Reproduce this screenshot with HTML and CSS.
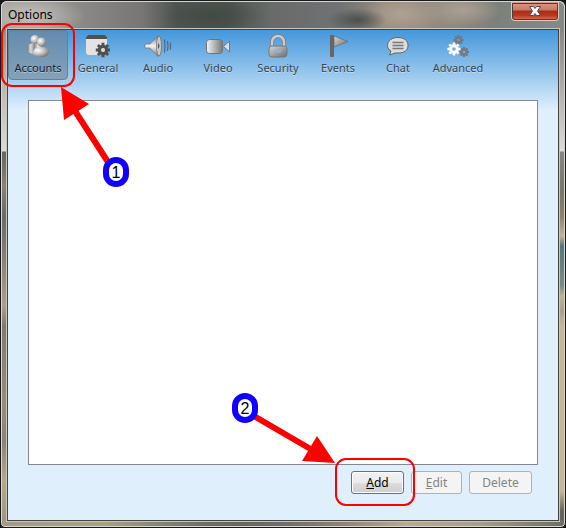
FILE: index.html
```html
<!DOCTYPE html>
<html lang="en">
<head>
<meta charset="utf-8">
<title>Options</title>
<link rel="stylesheet" href="styles.css">
</head>
<body>
<svg class="defs" aria-hidden="true">
  <defs>
    <linearGradient id="metal" x1="0" x2="1" y1="0" y2="0"><stop offset="0" stop-color="#f4f4f4"/><stop offset="1" stop-color="#777"/></linearGradient>
    <linearGradient id="metalDark" x1="0" x2="1" y1="0" y2="1"><stop offset="0" stop-color="#d8d8d8"/><stop offset="1" stop-color="#6c6c6c"/></linearGradient>
    <linearGradient id="cone" x1="0" x2="0" y1="0" y2="1"><stop offset="0" stop-color="#777"/><stop offset=".5" stop-color="#f2f2f2"/><stop offset="1" stop-color="#777"/></linearGradient>
    <linearGradient id="body" x1="0" x2="1" y1="0" y2="0"><stop offset="0" stop-color="#777"/><stop offset=".25" stop-color="#ddd"/><stop offset=".5" stop-color="#888"/><stop offset=".75" stop-color="#f2f2f2"/><stop offset="1" stop-color="#999"/></linearGradient>
    <radialGradient id="ball" cx=".35" cy=".35" r=".7"><stop offset="0" stop-color="#fff"/><stop offset=".5" stop-color="#c6c6c6"/><stop offset="1" stop-color="#777"/></radialGradient>
    <g id="gear">
      <path id="teeth" d="M-1.200-6h2.400v3h-2.400zM-1.200 3h2.400v3h-2.400z" stroke="none"/>
      <use href="#teeth" transform="rotate(45)"/>
      <use href="#teeth" transform="rotate(90)"/>
      <use href="#teeth" transform="rotate(135)"/>
      <circle r="3" fill="none" stroke-width="2.800"/>
    </g>
  </defs>
</svg>
<div class="window">
  <header class="titlebar">
    <h1 class="title">Options</h1>
    <button class="close" type="button" aria-label="Close">
      <svg width="14" height="12" viewBox="0 0 14 12"><path d="M1.500 1.500h4L7 3.500l1.500-2h4L9.500 6l3 4.500h-4L7 8.500l-1.500 2h-4l3-4.500z" fill="#fff" stroke="#5b4650"/></svg>
    </button>
  </header>
  <main class="client">
    <nav class="toolbar" aria-label="Categories">
      <button class="tab selected" type="button">
        <svg class="icon" viewBox="0 0 24 24"><circle cx="9" cy="5.500" r="4.500" fill="url(#ball)"/><path d="M1 15c0-4 3-6 8-6l7 3v7c-7 2-15 1-15-4z" fill="url(#body)"/><circle cx="15.500" cy="8" r="4.500" fill="url(#ball)"/><path d="M8 16c1-3 4-3 8-3 5 0 7 2 7 5s-3 5-8 5c-4 0-8-1-9-4z" fill="url(#ball)"/></svg>
        <span>Accounts</span>
      </button>
      <button class="tab" type="button">
        <svg class="icon" viewBox="0 0 24 24"><rect x="0" y="1" width="21" height="20" rx="3" fill="#e3e3e3"/><path d="M0 5V4q0-3 3-3h15q3 0 3 3v1z" fill="#505050"/><g transform="translate(17 16) scale(1.200)" fill="#505050" stroke="#505050"><use href="#gear"/></g><circle cx="17" cy="16" r="1.800" fill="#d8d8d8"/></svg>
        <span>General</span>
      </button>
      <button class="tab" type="button">
        <svg class="icon wide" viewBox="0 0 28 24"><path d="M1 10h5l8-8.500c3 3 3 18 0 21L6 14H1z" fill="url(#cone)" stroke="#777" stroke-width=".7"/><ellipse cx="15" cy="12" rx="2.500" ry="10" fill="#c8c8c8" stroke="#666" stroke-width=".7"/><path d="M14 9q3 3 0 6z" fill="#555"/><path d="M20.500 5.500q1 6 0 13M23.500 7q1 5 0 10M26.500 8.500v7" fill="none" stroke="#52657a" stroke-width="1.200"/></svg>
        <span>Audio</span>
      </button>
      <button class="tab" type="button">
        <svg class="icon" viewBox="0 0 24 24"><rect x=".5" y="5.500" width="16" height="14" rx="3" fill="url(#metal)" stroke="#747474"/><path d="M17.500 12.500l6-5.500v11z" fill="#ddd" stroke="#747474"/></svg>
        <span>Video</span>
      </button>
      <button class="tab" type="button">
        <svg class="icon" viewBox="0 0 24 24"><path d="M6 13V8a6 6 0 0 1 12 0v5" fill="none" stroke="#777" stroke-width="4"/><path d="M6 13V8a6 6 0 0 1 12 0v5" fill="none" stroke="#ccc" stroke-width="2.500"/><rect x="3" y="12" width="18" height="11" rx="3" fill="url(#metalDark)" stroke="#777"/><ellipse cx="12" cy="17" rx="3.500" ry="1.500" fill="#80b6df"/></svg>
        <span>Security</span>
      </button>
      <button class="tab" type="button">
        <svg class="icon" viewBox="0 0 24 24"><path d="M8 2l14 5.500L8 13z" fill="url(#metalDark)" stroke="#666" stroke-width=".7"/><rect x="4" y="1" width="4" height="22" rx="1" fill="#666"/></svg>
        <span>Events</span>
      </button>
      <button class="tab" type="button">
        <svg class="icon" viewBox="0 0 24 24"><path d="M12 3.500c6 0 10 3 10 8s-4 7.500-10 7.500H9l-5.500 2 1.500-4c-2-1-3.500-3-3.500-5.500 0-5 4.500-8 10.500-8z" fill="#ddd" stroke="#666"/><path d="M6.500 8.500h11M6.500 11.500h11M6.500 14.500h11" stroke="#777" stroke-width="1.300"/></svg>
        <span>Chat</span>
      </button>
      <button class="tab advanced" type="button">
        <svg class="icon" viewBox="0 0 24 24"><g transform="translate(12.500 6) scale(.85)" fill="#74797d" stroke="#74797d"><use href="#gear"/></g><g transform="translate(18 18) scale(.85)" fill="#74797d" stroke="#74797d"><use href="#gear"/></g><g transform="translate(8 15) scale(1.100)" fill="#fff" stroke="#fff"><use href="#gear"/></g></svg>
        <span>Advanced</span>
      </button>
    </nav>
    <div class="accounts" role="listbox" aria-label="Accounts"></div>
    <div class="actions">
      <button class="action add" type="button" accesskey="a"><u>A</u>dd</button>
      <button class="action edit" type="button" accesskey="e" disabled><u>E</u>dit</button>
      <button class="action delete" type="button" disabled>Delete</button>
    </div>
  </main>
  <svg class="callout first" width="140" height="190" viewBox="0 0 140 190" role="img" aria-label="Step 1: Accounts">
    <rect x="2" y="14" width="72" height="62" rx="10" fill="none" stroke="red" stroke-width="2"/>
    <path d="M75 101l33 51" stroke="red" stroke-width="6"/>
    <path d="M61 77l28 17-25 16z" fill="red"/>
    <rect x="106" y="150" width="20" height="24" rx="10" fill="#fff" stroke="#1000ff" stroke-width="6"/>
    <text x="116" y="168" text-anchor="middle">1</text>
  </svg>
  <svg class="callout second" width="190" height="120" viewBox="0 0 190 120" role="img" aria-label="Step 2: Add">
    <rect x="106" y="69" width="78" height="46" rx="10" fill="none" stroke="red" stroke-width="2"/>
    <path d="M24 26l60 35" stroke="red" stroke-width="6"/>
    <path d="M105 73l-33-2 15-25z" fill="red"/>
    <rect x="5" y="6" width="20" height="24" rx="10" fill="#fff" stroke="#1000ff" stroke-width="6"/>
    <text x="15" y="24" text-anchor="middle">2</text>
  </svg>
</div>
</body>
</html>
```

FILE: styles.css
```css
* {
  box-sizing: border-box;
}

body {
  margin: 0;
  background: #151719;
  font: 12px/16px "Noto Sans", "Open Sans", sans-serif;
}

.defs {
  position: absolute;
  width: 0;
  height: 0;
}

.window {
  position: relative;
  display: flex;
  flex-direction: column;
  min-height: 100vh;
  padding: 0 6px 6px;
  border: 1px solid #17191b;
  border-radius: 7px 7px 5px 5px;
  box-shadow: inset 0 0 0 1px #d9d5d0;
  background:
    linear-gradient(90deg, #a39a87, #aaa184 18%, #696f69 36%, #67665f 42%, #6f6c6d 50%, #8e8075 60%, #b9aa90 72%, #a79d88 85%, #6b6d65) bottom / 100% 7px no-repeat,
    linear-gradient(#777 0, #b9b4b0 80px, #dedad6 150px, #686461 151px, #8d8178 185px, #6b696d 215px, #8c8078 260px, #b19e87 305px, #837870 325px, #9a8c7c 400px, #8d8277 440px, #b9a78c 480px, #9c927f) left / 7px 100% no-repeat,
    linear-gradient(#777 0, #aaa7a5 80px, #dedcda 150px, #88877f 151px, #77776e 190px, #8d8068 215px, #c0b397 235px, #557681 245px, #758d87 285px, #c2b491 295px, #a99f83 310px, #c6b893 325px, #c6b893 490px, #65645b 510px) right / 7px 100% no-repeat,
    #777;
}

.titlebar {
  display: flex;
  justify-content: space-between;
  align-items: flex-start;
  height: 28px;
  margin: 0 -6px;
  padding: 0 5px 0 6px;
  border: 1px solid #d9d5d0;
  border-width: 1px 1px 0;
  border-radius: 6px 6px 0 0;
  background:
    radial-gradient(ellipse 55px 22px at 28px 14px, #c4c1be, transparent),
    radial-gradient(ellipse 30px 12px at 355px 18px, #4a504d, transparent),
    radial-gradient(ellipse 50px 16px at 210px 14px, #424a44, transparent),
    radial-gradient(ellipse 40px 20px at 400px 12px, #b0a292, transparent),
    radial-gradient(ellipse 40px 16px at 460px 8px, #aaa093, transparent),
    linear-gradient(90deg, #a09e9b, #8b8986 14%, #777674 25%, #4e544f 31%, #4c534d 40%, #686b69 48%, #707274 60%, #958a7e 68%, #928a7e 80%, #7b807a 88%, #858b87);
}

.title {
  margin: 5px 0 0;
  font-size: 12px;
  line-height: 16px;
  font-weight: 400;
}

.close {
  display: flex;
  align-items: center;
  justify-content: center;
  width: 48px;
  height: 19px;
  padding: 0;
  border: 1px solid #e1c7c1;
  border-top: 0;
  border-radius: 0 0 4px 4px;
  background: linear-gradient(#d99e8c, #cb7765 45%, #a82b16 50%, #ba3a20 75%, #dc755a);
  outline: 1px solid #503936;
  outline-offset: -2px;
}

.client {
  display: flex;
  flex: 1;
  flex-direction: column;
  border: 1px solid #43443f;
  outline: 1px solid #c9c5ba;
  background: #dfeffc linear-gradient(#4497db, #dfeffc) top / 100% 80px no-repeat;
}

.toolbar {
  display: flex;
  height: 50px;
}

.tab {
  display: flex;
  flex-direction: column;
  align-items: center;
  width: 60px;
  padding: 3px 0 0;
  border: 1px solid transparent;
  border-radius: 4px;
  background: none;
  color: #3c454d;
  font: 11px/16px "Noto Sans", "Open Sans", sans-serif;
  text-shadow: 0 1px 0 #ffffff66;
}

.tab.selected {
  border-color: #6c7f90;
  background: linear-gradient(#648bae, #85a2b9);
  color: #17202a;
}

.icon {
  width: 24px;
  height: 24px;
  margin-bottom: 2px;
}

.icon.wide {
  width: 28px;
}

.accounts {
  flex: 1;
  margin: 20px 20px 0;
  border: 1px solid #828790;
  background: #fff;
}

.actions {
  display: flex;
  justify-content: flex-end;
  gap: 7px;
  padding: 6px 26px 26px;
}

.action {
  height: 23px;
  padding: 0;
  border: 1px solid #adb2b5;
  border-radius: 3px;
  background: #f4f4f4;
  color: #838383;
  font: 12px/16px "Noto Sans", "Open Sans", sans-serif;
}

.add {
  width: 53px;
  border-color: #707070;
  box-shadow: inset 0 0 0 1px #fcfcfc;
  background: linear-gradient(#f2f2f2, #ebebeb 50%, #ddd 50%, #cfcfcf);
  color: #000;
}

.edit {
  width: 51px;
}

.delete {
  width: 63px;
}

.callout {
  position: absolute;
  pointer-events: none;
  font: 16px "Liberation Sans", sans-serif;
}

.first {
  top: 9px;
  left: -1px;
}

.second {
  right: 145px;
  bottom: 17px;
}
```
